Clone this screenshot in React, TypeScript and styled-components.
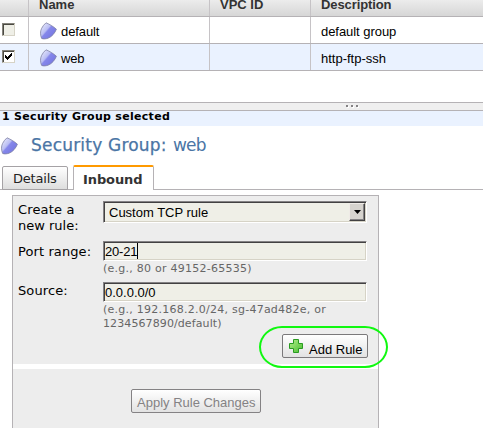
import React from "react";
import styled, { createGlobalStyle, css } from "styled-components";

const GlobalStyle = createGlobalStyle`
  * { box-sizing: border-box; }
  html, body { margin: 0; background: #fff; }
  body { overflow: hidden; color: #000; }
`;

const arial = css`font-family: "Liberation Sans", Arial, sans-serif;`;
const verdana = css`font-family: "DejaVu Sans", Verdana, sans-serif;`;

const Page = styled.div`
  width: 483px;
  height: 428px;
  overflow: hidden;
  background: #fff;
`;

const Text = styled.span<{ $ls?: number }>`
  display: block;
  white-space: nowrap;
  letter-spacing: ${(p) => p.$ls ?? 0}px;
`;

/* ---------- group table ---------- */
const Row = styled.div<{ $selected?: boolean }>`
  ${arial}
  display: grid;
  grid-template-columns: 29px 181px 101px 1fr;
  height: 27px;
  font-size: 13px;
  line-height: 30px;
  border-bottom: 1px solid #b5b2b5;
  background: ${(p) => (p.$selected ? "#eaf2ff" : "#fff")};
`;

const HeaderRow = styled(Row)`
  height: 17px;
  line-height: 10px;
  font-weight: bold;
  color: #333;
  background: linear-gradient(#ececec, #d6d6d6);
`;

const Cell = styled.div`
  display: flex;
  height: 100%;
  min-height: 0;
  padding-left: 10px;
  border-right: 1px solid #c6c3c6;
  &:last-child { border-right: 0; }
`;

const CheckCell = styled(Cell)`
  padding: 6px 0 0 2px;
`;

const NameCell = styled(Cell)`
  padding-left: 11px;
  gap: 4px;
  svg { margin-top: 5px; }
`;

const CheckBox = styled.span<{ $enabled?: boolean }>`
  width: 13px;
  height: 13px;
  border: 1px solid;
  border-color: #84827b #d6d3c6 #d6d3c6 #84827b;
  box-shadow: inset 1px 1px #4a4942;
  background: ${(p) => (p.$enabled ? "#fff" : "#efefe7")};
  svg { display: block; margin: 1px; }
`;

/* ---------- splitter and status ---------- */
const Splitter = styled.div`
  display: flex;
  gap: 3px;
  height: 9px;
  margin-top: 31px;
  padding: 2px 0 0 346px;
  border-top: 1px solid #b5b2b5;
  border-bottom: 1px solid #b5b2b5;
  background: #efefef;
`;

const Dot = styled.i`
  width: 2px;
  height: 2px;
  background: #848284;
  box-shadow: 1px 1px #fff;
`;

const Status = styled.div`
  ${verdana}
  height: 15px;
  padding-left: 2px;
  font-size: 11px;
  font-weight: bold;
  line-height: 11px;
  background: #eaf2ff;
`;

const Title = styled.div`
  ${verdana}
  display: flex;
  height: 39px;
  padding: 11px 0 0 1px;
  font-size: 17px;
  line-height: 17px;
  color: #4a75a5;
`;

const TitleStrong = styled(Text)`
  width: 142px;
  margin-left: 13px;
  -webkit-text-stroke: 0.25px #4a75a5;
`;

/* ---------- tabs ---------- */
const TabBar = styled.div`
  ${verdana}
  display: flex;
  align-items: flex-end;
  height: 25px;
  padding-left: 2px;
  box-shadow: inset 0 -1px #b5b2b5;
`;

const Tab = styled.div<{ $active?: boolean }>`
  width: 66px;
  height: 24px;
  padding: 1px 0 0 10px;
  border: 1px solid #a5a2a5;
  border-radius: 2px 2px 0 0;
  font-size: 13px;
  line-height: 22px;
  color: #222;
  background: linear-gradient(#fff, #dedede);
  ${(p) =>
    p.$active &&
    css`
      width: 81px;
      height: 25px;
      margin-left: 5px;
      padding: 2px 0 0 9px;
      border-color: #b5b2b5;
      border-top: 2px solid #ff9a00;
      border-bottom: 0;
      font-weight: bold;
      color: #333;
      background: #fff;
    `}
`;

/* ---------- rule form ---------- */
const Panel = styled.div`
  ${verdana}
  width: 367px;
  height: 240px;
  margin: 5px 0 0 12px;
  border: 1px solid #b5b2b5;
  background: #ededed;
`;

const FormSection = styled.div`
  height: 168px;
`;

const Field = styled.div<{ $h: number; $top: number }>`
  display: grid;
  grid-template-columns: 85px 264px;
  align-items: start;
  height: ${(p) => p.$h}px;
  padding: ${(p) => p.$top}px 0 0 5px;
`;

const Label = styled.div<{ $top: number }>`
  padding-top: ${(p) => p.$top}px;
  font-size: 13px;
  line-height: 16px;
  color: #000;
`;

const Control = styled.div<{ $select?: boolean }>`
  ${arial}
  display: flex;
  height: ${(p) => (p.$select ? 22 : 20)}px;
  padding: 1px 1px 0 ${(p) => (p.$select ? 5 : 1)}px;
  border: 1px solid;
  border-color: #848284 #fff #fff #848284;
  box-shadow: inset 1px 1px #424142, inset -1px -1px #d6d3c6;
  font-size: 13px;
  line-height: ${(p) => (p.$select ? 20 : 18)}px;
  background: #efefe7;
`;

const Caret = styled.i`
  width: 1px;
  height: 16px;
  background: #000;
`;

const Arrow = styled.span`
  display: flex;
  justify-content: center;
  align-items: center;
  width: 16px;
  height: 18px;
  margin-left: auto;
  border: 1px solid;
  border-color: #efebe7 #424142 #424142 #efebe7;
  box-shadow: inset -1px -1px #848284;
  background: #d6d3ce;
`;

const Hint = styled.div`
  padding-top: 1px;
  font-size: 11px;
  line-height: 14px;
  color: #666;
`;

const Button = styled.button<{ $w: number }>`
  ${arial}
  display: flex;
  align-items: flex-start;
  width: ${(p) => p.$w}px;
  height: 24px;
  padding: 0 0 0 5px;
  border: 1px solid #7b797b;
  border-radius: 2px;
  font-size: 13px;
  line-height: 30px;
  color: #000;
  background: linear-gradient(#fff, #e2e2e2);
  &:disabled { color: #848284; border-color: #848284; line-height: 25px; }
`;

const AddArea = styled.div`
  position: relative;
  display: flex;
  justify-content: flex-end;
  padding-right: 10px;
  svg { margin: 4px 6px 0 1px; }
`;

const Highlight = styled.div`
  position: absolute;
  top: -8px;
  right: -10px;
  width: 129px;
  height: 42px;
  border: 2px solid #10f810;
  border-radius: 23px / 21px;
`;

const Divider = styled.div`
  height: 5px;
  background: #fff;
`;

const Footer = styled.div`
  display: flex;
  padding: 20px 0 0 118px;
`;

const ShieldIcon = () => (
  <svg width="17" height="18" viewBox="0 0 17 18">
    <defs>
      <linearGradient id="shield" x1="0" y1="0.1" x2="0.9" y2="0.9">
        <stop offset="0" stopColor="#eceefb" />
        <stop offset="0.42" stopColor="#b9bdf3" />
        <stop offset="0.5" stopColor="#8587ea" />
        <stop offset="1" stopColor="#7375e0" />
      </linearGradient>
    </defs>
    <path d="M6 .8C9.5 2.2 13.2 4.4 16.4 7.2C15 10.8 12 14.8 8 16.2C5.8 17 3.2 17.2 1.6 16.4C.2 13 .1 9.4 1.6 6.4C2.6 4.3 4.2 2.3 6 .8Z" fill="url(#shield)" stroke="#7d80a3" strokeWidth=".8" />
  </svg>
);

const CheckIcon = () => (
  <svg width="9" height="9" viewBox="0 0 9 9" shapeRendering="crispEdges">
    <path d="M1 3V6L3 8L8 3V0L3 5Z" fill="#000" />
  </svg>
);

const PlusIcon = () => (
  <svg width="14" height="14" viewBox="0 0 14 14">
    <defs>
      <linearGradient id="plus" x1="0" y1="0" x2="1" y2="1">
        <stop offset="0" stopColor="#b6f08e" />
        <stop offset="1" stopColor="#45bd2c" />
      </linearGradient>
    </defs>
    <path d="M4.5 .5H9.5V4.5H13.5V9.5H9.5V13.5H4.5V9.5H.5V4.5H4.5Z" fill="url(#plus)" stroke="#299a21" />
  </svg>
);

export default function App() {
  return (
    <Page>
      <GlobalStyle />
      <HeaderRow>
        <Cell />
        <Cell><Text>Name</Text></Cell>
        <Cell><Text>VPC ID</Text></Cell>
        <Cell><Text $ls={-0.1}>Description</Text></Cell>
      </HeaderRow>
      <Row>
        <CheckCell><CheckBox /></CheckCell>
        <NameCell><ShieldIcon /><Text $ls={-0.1}>default</Text></NameCell>
        <Cell />
        <Cell><Text $ls={-0.05}>default group</Text></Cell>
      </Row>
      <Row $selected>
        <CheckCell><CheckBox $enabled><CheckIcon /></CheckBox></CheckCell>
        <NameCell><ShieldIcon /><Text $ls={-0.2}>web</Text></NameCell>
        <Cell />
        <Cell><Text>http-ftp-ssh</Text></Cell>
      </Row>

      <Splitter><Dot /><Dot /><Dot /></Splitter>
      <Status><Text $ls={0.3}>1 Security Group selected</Text></Status>

      <Title>
        <ShieldIcon />
        <TitleStrong $ls={0.2}>Security Group:</TitleStrong>
        <Text $ls={-0.8}>web</Text>
      </Title>

      <TabBar>
        <Tab><Text $ls={-0.2}>Details</Text></Tab>
        <Tab $active><Text $ls={-0.1}>Inbound</Text></Tab>
      </TabBar>

      <Panel>
        <FormSection>
          <Field $h={45} $top={5}>
            <Label $top={1}><Text $ls={0.15}>Create a</Text><Text>new rule:</Text></Label>
            <Control $select>
              <Text>Custom TCP rule</Text>
              <Arrow>
                <svg width="7" height="4" viewBox="0 0 7 4"><path d="M0 0H7L3.5 4Z" /></svg>
              </Arrow>
            </Control>
          </Field>
          <Field $h={41} $top={0}>
            <Label $top={3}><Text $ls={0.1}>Port range:</Text></Label>
            <div>
              <Control><Text $ls={-0.2}>20-21</Text><Caret /></Control>
              <Hint><Text $ls={0.25}>(e.g., 80 or 49152-65535)</Text></Hint>
            </div>
          </Field>
          <Field $h={52} $top={0}>
            <Label $top={1}><Text $ls={0.1}>Source:</Text></Label>
            <div>
              <Control><Text>0.0.0.0/0</Text></Control>
              <Hint>
                <Text $ls={0.25}>(e.g., 192.168.2.0/24, sg-47ad482e, or</Text>
                <Text $ls={0.1}>1234567890/default)</Text>
              </Hint>
            </div>
          </Field>
          <AddArea>
            <Button $w={86}><PlusIcon /><Text>Add Rule</Text></Button>
            <Highlight />
          </AddArea>
        </FormSection>
        <Divider />
        <Footer>
          <Button $w={130} disabled><Text>Apply Rule Changes</Text></Button>
        </Footer>
      </Panel>
    </Page>
  );
}
